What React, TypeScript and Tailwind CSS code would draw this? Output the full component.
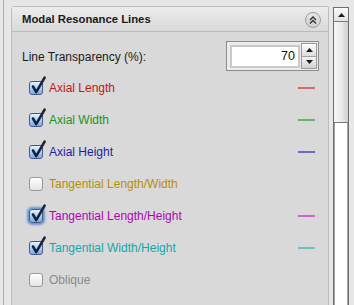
import React from "react";

/* ── Rows shown in the panel ── */
const LINES = [
  { label: "Axial Length", text: "text-[#c81414]", swatch: "bg-[#d46a6a]", checked: true },
  { label: "Axial Width", text: "text-[#189418]", swatch: "bg-[#68b068]", checked: true },
  { label: "Axial Height", text: "text-[#1c1cb4]", swatch: "bg-[#6a6acc]", checked: true },
  { label: "Tangential Length/Width", text: "text-[#b88f00]", swatch: "", checked: false },
  { label: "Tangential Length/Height", text: "text-[#b400b4]", swatch: "bg-[#cc66cc]", checked: true, focus: true },
  { label: "Tangential Width/Height", text: "text-[#10a8ae]", swatch: "bg-[#66c4c4]", checked: true },
  { label: "Oblique", text: "text-[#8a8a8a]", swatch: "", checked: false },
];

function Checkbox({ checked, focus }: { checked: boolean; focus?: boolean }) {
  return (
    <div
      className={
        "relative h-[14px] w-[14px] shrink-0 rounded-[3px] border " +
        (checked
          ? "border-[#4b5878] bg-gradient-to-b from-[#e4f2ff] via-[#a9d2fa] to-[#6fb0ee]"
          : "border-[#9a9a9a] bg-gradient-to-b from-[#ffffff] to-[#e4e4e4]") +
        (focus ? " shadow-[0_0_2px_2px_rgba(70,130,215,0.75)]" : "")
      }
    >
      {checked && (
        <svg
          className="absolute left-[-2px] top-[-6px]"
          width="19"
          height="20"
          viewBox="0 0 19 20"
        >
          <path
            d="M5 10.5 L8.2 16.2 L16.6 1.6"
            fill="none"
            stroke="#18233d"
            strokeWidth="2.6"
            strokeLinecap="round"
            strokeLinejoin="round"
          />
        </svg>
      )}
    </div>
  );
}

export default function App() {
  return (
    <div className="flex h-[305px] w-[354px] overflow-hidden bg-[#e7e7e7] font-['Liberation_Sans',Arial,sans-serif]">
      {/* ── left rule ── */}
      <div className="ml-[3px] w-px shrink-0 bg-[#ababab]" />

      {/* ── Panel ── */}
      <div className="ml-[7px] mt-[6px] flex w-[318px] shrink-0 flex-col rounded-tl-[4px] rounded-tr-[2px] border border-b-0 border-[#bdbdbd] bg-[#d9d9d9]">
        {/* header */}
        <div className="flex h-[25px] shrink-0 items-center justify-between border-b border-[#bcbcbc] bg-gradient-to-b from-[#ececec] to-[#dadada] pl-[10px] pr-[7px]">
          <span className="text-[11.3px] font-bold text-[#1a1a1a]">Modal Resonance Lines</span>
          <div className="mt-[1px] flex h-[16px] w-[16px] items-center justify-center rounded-full border border-[#9c9c9c] bg-gradient-to-b from-[#e6e6e6] to-[#cfcfcf]">
            <svg width="10" height="10" viewBox="0 0 10 10">
              <path d="M2 5 L5 2 L8 5 M2 8.5 L5 5.5 L8 8.5" fill="none" stroke="#2e2e2e" strokeWidth="1.3" />
            </svg>
          </div>
        </div>

        {/* body */}
        <div className="flex flex-col pl-[10px] pr-[9px]">
          <div className="mb-[1px] mt-[9px] flex h-[30px] items-center justify-between">
            <span className="mt-[1px] text-[12px] text-[#1a1a1a]">Line Transparency (%):</span>
            <div className="flex h-[30px] w-[93px] border border-[#8c8c8c] bg-[#ececec]">
              <div className="flex flex-1 items-center pl-[3px] pr-[1px]">
                <div className="flex h-[23px] flex-1 items-center justify-end border-2 border-[#c9c9c9] bg-white pr-[3px] text-[12.5px] text-[#111]">
                  70
                </div>
              </div>
              <div className="my-[1px] mr-[1px] flex w-[16px] flex-col border border-[#9a9a9a]">
                <div className="flex flex-1 items-center justify-center border-b border-[#a4a4a4] bg-gradient-to-b from-[#ffffff] to-[#dcdcdc]">
                  <svg width="7" height="4" viewBox="0 0 7 4">
                    <path d="M0 4 L3.5 0 L7 4 Z" fill="#1e1e1e" />
                  </svg>
                </div>
                <div className="flex flex-1 items-center justify-center bg-gradient-to-b from-[#f4f4f4] to-[#d2d2d2]">
                  <svg width="7" height="4" viewBox="0 0 7 4">
                    <path d="M0 0 L3.5 4 L7 0 Z" fill="#1e1e1e" />
                  </svg>
                </div>
              </div>
            </div>
          </div>

          {LINES.map((l) => (
            <div key={l.label} className="flex h-[32px] items-center pl-[7px]">
              <Checkbox checked={l.checked} focus={l.focus} />
              <span className={"ml-[6px] flex-1 text-[12px] " + l.text}>{l.label}</span>
              {l.swatch && <div className={"mr-[4px] h-[2px] w-[17px] " + l.swatch} />}
            </div>
          ))}
        </div>
      </div>

      {/* ── Scrollbar ── */}
      <div className="ml-[4px] mt-[7px] flex w-[16px] shrink-0 flex-col border border-b-0 border-[#6e6e6e] bg-white shadow-[inset_1px_0_0_#a6a6a6,inset_-1px_0_0_#a6a6a6]">
        <div className="flex h-[14px] items-center justify-center border-b border-[#7a7a7a] bg-gradient-to-b from-[#fafafa] to-[#e2e2e2]">
          <svg width="7" height="4" viewBox="0 0 7 4">
            <path d="M0 4 L3.5 0 L7 4 Z" fill="#1e1e1e" />
          </svg>
        </div>
        <div className="h-[101px] border-b border-[#7a7a7a] bg-gradient-to-r from-[#f6f6f6] via-[#ebebeb] to-[#cfcfcf]" />
      </div>
    </div>
  );
}
